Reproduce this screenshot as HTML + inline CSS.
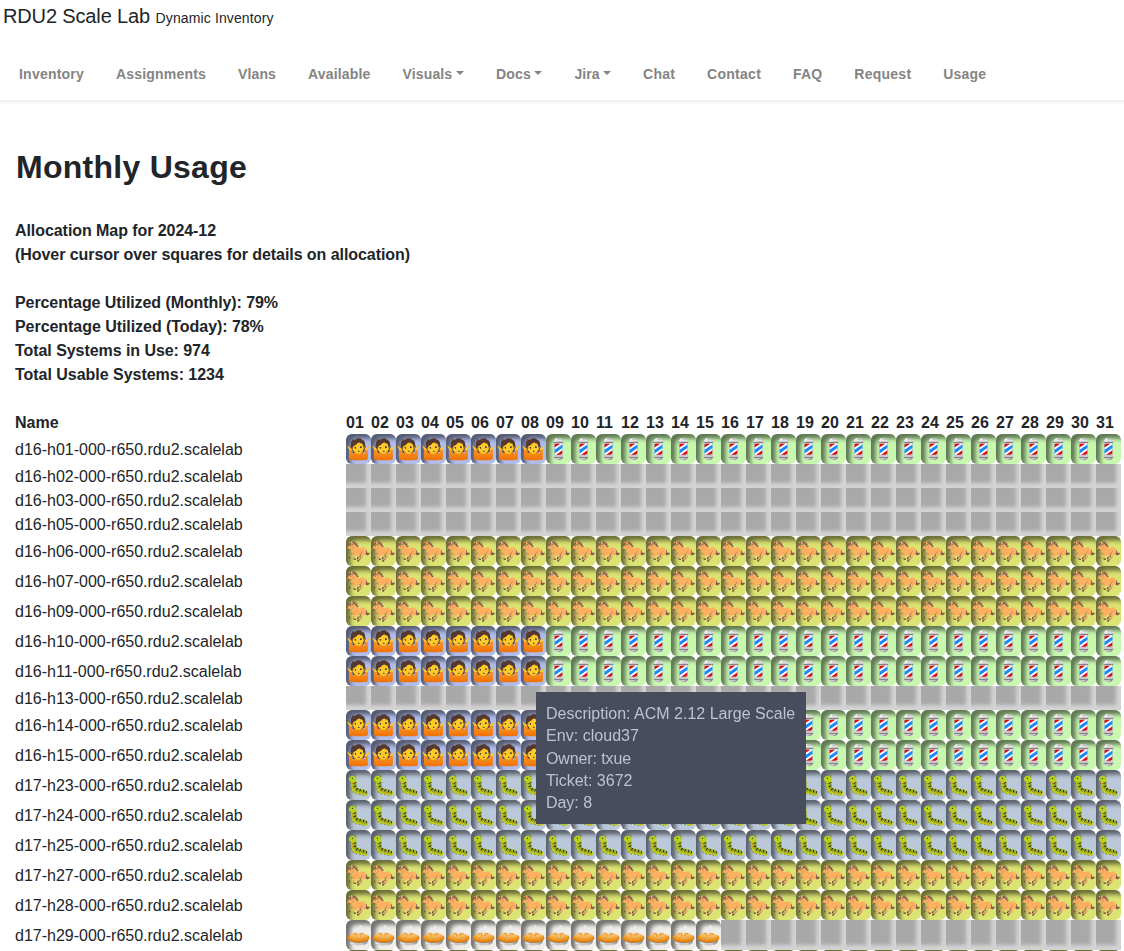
<!DOCTYPE html>
<html lang="en">
<head>
<meta charset="utf-8">
<title>RDU2 Scale Lab - Monthly Usage</title>
<style>
*{box-sizing:border-box}
html,body{margin:0;padding:0}
body{width:1124px;height:951px;overflow:hidden;background:#fff;color:#212529;font-family:"Liberation Sans",sans-serif;font-size:16px;line-height:24px;position:relative}
header{position:absolute;left:-10px;top:0;width:1144px;height:100px;background:#fff;box-shadow:0 2px 4px rgba(0,0,0,.08)}
.brand{position:absolute;left:13px;top:1px;font-size:20px;line-height:30px;white-space:nowrap}
.brand small{font-size:14px}
nav{position:absolute;left:13px;top:62px;height:24px;white-space:nowrap;font-size:0}
nav a{display:inline-block;font-size:14px;font-weight:700;color:#848484;padding:0 16px;line-height:24px}
nav a.dd::after{content:"";display:inline-block;margin-left:3.6px;vertical-align:4.5px;border-top:4.2px solid;border-left:4.2px solid transparent;border-right:4.2px solid transparent}
main{position:absolute;left:15px;top:0;width:1109px}
h1{position:absolute;left:1px;top:148px;margin:0;font-size:32px;line-height:38px;font-weight:700;white-space:nowrap}
.info{position:absolute;left:0;top:219px;white-space:nowrap}
table{position:absolute;left:0;top:410px;border-collapse:collapse;border-spacing:0;table-layout:fixed;width:1106px}
th,td{padding:0;text-align:left;vertical-align:middle;white-space:nowrap;overflow:visible}
th,td.n{line-height:22px;padding-top:2px}
th{font-weight:700;height:24px;width:25px}
.n{width:331px}
td.g{height:24px;background:#a9a9a9;box-shadow:inset -5px -5px 3.8px #d3d3d3}
td.e{height:30px;border-radius:6px;position:relative}
td.e i{display:block;width:25px;height:30px;position:relative}
td.e i::before,td.e i::after,td.e b::before,td.e b::after,td.e u::before,td.e u::after{content:"";position:absolute;left:0;top:0;width:25px;height:30px}
.s{background:#b0bdeb}
.b{background:#c8f8b0}
.h{background:#dbe372}
.c{background:#bbc8da}
.p{background:#efeeea}
td.e{box-shadow:inset 4.5px 4.5px 4px rgba(0,0,0,.52)}
.tip{position:absolute;left:521px;top:692px;width:270px;height:132px;background:#484d5e;color:#bcc2cf;padding:10px;line-height:22.4px;white-space:nowrap}
.tip .d{position:relative;top:1px}
.tip{will-change:transform}
.s i::before{background:#543930;clip-path:path('M18.46,16.2Q18.63,16.45 18.96,16.49Q19.3,16.53 19.3,16.53Q19.3,16.53 19.22,16.76Q19.14,16.98 18.91,17.16Q18.69,17.33 18.44,17.41Q18.18,17.49 17.99,17.51Q17.99,17.51 17.8,17.75Q17.62,18 17.22,18.33Q16.82,18.66 16.13,18.96Q15.45,19.27 14.45,19.38L12.97,19.56L11.48,19.75Q10.47,19.87 9.74,19.74Q9,19.62 8.54,19.39Q8.07,19.17 7.83,18.97Q7.6,18.78 7.6,18.78Q7.4,18.8 7.14,18.79Q6.88,18.78 6.62,18.66Q6.37,18.54 6.23,18.34Q6.09,18.13 6.09,18.13Q6.09,18.13 6.41,18.03Q6.72,17.92 6.84,17.62Q6.95,17.31 6.76,17.04Q6.56,16.77 6.17,16.43Q5.76,16.1 5.37,15.48Q4.98,14.85 4.8,14.01Q4.63,13.17 4.88,12.25Q4.88,12.23 4.98,12.15Q5.08,12.06 5.18,11.96Q5.27,11.86 5.27,11.86Q5.31,11.84 5.89,11.78Q6.46,11.71 7.41,11.59Q8.36,11.47 9.53,11.33Q10.7,11.18 11.93,11.02Q13.16,10.87 14.34,10.73Q15.51,10.59 16.46,10.48Q17.4,10.36 17.98,10.3Q18.55,10.24 18.57,10.24L18.89,10.2Q18.89,10.22 18.97,10.37Q19.06,10.52 19.06,10.52Q19.53,11.36 19.56,12.21Q19.59,13.05 19.36,13.77Q19.12,14.48 18.81,14.89Q18.52,15.3 18.39,15.61Q18.26,15.93 18.46,16.2Z')}
.s b::before{background:linear-gradient(#ffb300 11.41px,#ffca28 14.15px);clip-path:path('M5.55,14.87Q5.61,14.89 5.78,15.09Q5.96,15.28 5.96,15.67Q5.96,15.77 5.88,16.02Q5.8,16.28 5.71,16.56Q5.62,16.84 5.57,17Q5.53,17.14 5.39,17.14Q5.37,17.14 5.37,17.14L3.63,16.84Q3.48,16.8 3.48,16.67Q3.48,16.67 3.44,16.36Q3.4,16.04 3.25,15.6Q3.11,15.16 2.79,14.79L2.79,14.79Q2.64,14.64 2.35,14.2Q2.07,13.76 1.83,13.19Q1.58,12.62 1.52,12.08Q1.48,11.84 1.59,11.65Q1.7,11.45 1.86,11.39Q1.95,11.38 2.08,11.41Q2.21,11.45 2.29,11.63Q2.5,12.16 2.82,12.68Q3.14,13.21 3.32,13.45Q3.44,13.35 3.57,13.35Q3.83,13.33 4.06,13.5Q4.3,13.68 4.43,13.82Q4.94,14.4 5.55,14.87ZM23.09,11.39Q23.26,11.45 23.36,11.65Q23.46,11.84 23.42,12.08Q23.36,12.61 23.11,13.18Q22.85,13.76 22.58,14.2Q22.3,14.64 22.15,14.79L22.15,14.79Q21.78,15.22 21.64,15.65Q21.5,16.08 21.48,16.37Q21.46,16.65 21.46,16.65Q21.48,16.82 21.31,16.84L19.57,17.14Q19.57,17.14 19.55,17.14Q19.41,17.14 19.38,17Q19.32,16.84 19.23,16.56Q19.14,16.28 19.06,16.02Q18.98,15.77 18.98,15.69Q18.98,15.28 19.16,15.09Q19.34,14.89 19.39,14.87Q20,14.42 20.51,13.84Q20.64,13.68 20.88,13.5Q21.11,13.33 21.37,13.35Q21.5,13.37 21.62,13.45Q21.8,13.21 22.12,12.68Q22.44,12.16 22.64,11.65Q22.73,11.45 22.86,11.41Q22.99,11.38 23.09,11.39Z')}
.s u::before{background:linear-gradient(#f78c1f 18.46px,#f47f12 22.45px,#ef6c00 26.77px);clip-path:path('M21.93,23.78L21.91,16.36Q21.89,16.1 21.64,16.08L19.3,15.95Q19.3,15.95 19.29,15.95Q19.28,15.95 19.28,15.95Q19.02,15.95 18.98,16.2L18.5,19.68Q17.93,19.19 17.12,18.86Q16.31,18.52 15.23,18.52Q15.08,18.52 14.52,18.52Q13.96,18.52 13.21,18.52Q12.46,18.52 11.71,18.52Q10.96,18.52 10.4,18.51Q9.84,18.5 9.71,18.5Q8.61,18.5 7.8,18.83Q6.99,19.15 6.43,19.66L5.94,16.18Q5.9,15.93 5.64,15.93L5.62,15.93L3.28,16.06Q3.03,16.08 3.03,16.34L3.01,23.76Q2.99,24.4 3.3,24.94Q3.61,25.48 4.14,25.8Q4.67,26.12 5.33,26.12Q5.72,26.12 6.07,25.96L6.07,25.96Q6.93,25.55 7.05,24.62L7.05,24.62Q7.05,24.62 7.05,24.6L7.07,24.62L7.07,26.14L17.87,26.14L17.87,24.64L17.87,24.64L17.87,24.64Q17.93,25.11 18.22,25.48Q18.36,25.67 18.57,25.81Q18.71,25.91 18.87,25.98Q18.87,25.98 18.89,26Q19.22,26.14 19.61,26.14Q20.25,26.14 20.78,25.83Q21.31,25.52 21.62,24.97Q21.93,24.42 21.93,23.78Z')}
.s u::after{background:#e59600;clip-path:path('M10.78,17.78L14.12,17.78L14.12,19.62Q14.12,20.24 13.66,20.68Q13.2,21.12 12.46,21.12Q11.7,21.12 11.24,20.68Q10.78,20.24 10.78,19.62ZM16.56,11.45Q17.3,11.38 17.9,11.87Q18.5,12.37 18.59,13.15Q18.67,13.93 18.22,14.56Q17.77,15.18 17.03,15.26L7.93,16.38Q7.19,16.45 6.6,15.96Q6.02,15.48 5.92,14.7Q5.82,13.89 6.28,13.28Q6.74,12.66 7.46,12.57Z')}
.s b::after{background:radial-gradient(circle at 9.41px 13.8px,#404040 .55px,transparent 1.1px),radial-gradient(circle at 14.9px 13.11px,#404040 .55px,transparent 1.1px),radial-gradient(1.2px .8px at 12.7px 17.25px,#795548 60%,transparent 110%),#ffca28;clip-path:path('M11.23,5.45Q12.31,5.32 13.37,5.75Q14.44,6.18 15.35,7.09Q16.26,7.99 16.9,9.32Q17.53,10.65 17.73,12.32Q17.93,14 17.61,15.3Q17.3,16.6 16.6,17.52Q15.9,18.45 14.95,18.99Q14.01,19.52 12.96,19.65Q11.89,19.78 10.85,19.49Q9.8,19.19 8.9,18.46Q8,17.73 7.38,16.55Q6.75,15.36 6.55,13.69Q6.35,12.02 6.64,10.57Q6.93,9.13 7.6,8.03Q8.27,6.93 9.2,6.26Q10.13,5.59 11.23,5.45L11.23,5.45Z')}
.s i::after{background:#543930;clip-path:path('M18.2,6.98Q18.38,7.2 18.6,7.68Q18.83,8.17 18.96,8.85Q19.1,9.52 18.98,10.28Q18.91,10.85 18.71,11.21Q18.52,11.57 18.35,11.78Q18.18,11.98 18.18,12.12Q18.18,12.66 18.06,13.19Q17.93,13.72 17.85,13.99Q17.83,14.05 17.78,14.05Q17.73,14.05 17.73,13.99Q17.58,13.33 17.37,12.47Q17.17,11.61 16.95,11Q16.68,10.2 16.3,9.84Q15.92,9.48 15.55,9.39Q15.18,9.3 14.93,9.34Q14.69,9.38 14.69,9.38Q14.69,9.38 14.55,9.18Q14.41,8.97 14.09,8.79Q13.77,8.6 13.22,8.62Q12.68,8.64 11.88,9.07Q11.29,9.4 10.78,9.89Q9.96,10.67 9.15,11.14Q8.34,11.61 7.81,11.82Q7.29,12.04 7.29,12.04Q7.32,12.2 7.3,12.64Q7.29,13.09 7.24,13.66Q7.19,14.23 7.13,14.73Q7.07,15.24 7.03,15.5Q7.03,15.54 6.98,15.54Q6.93,15.55 6.91,15.52Q6.78,15.28 6.57,14.68Q6.37,14.07 6.31,13.05Q6.31,13.05 6.01,12.98Q5.7,12.9 5.35,12.69Q5,12.49 4.8,12.14Q4.45,11.43 4.66,10.86Q4.86,10.28 5.14,9.97Q5.02,9.73 4.93,9.26Q4.84,8.78 5.06,8.13Q5.25,7.59 5.65,7.34Q6.05,7.1 6.43,7.04Q6.17,6.51 6.24,6.1Q6.31,5.69 6.51,5.42Q6.72,5.14 6.91,5.02Q7.11,4.89 7.11,4.89Q7.11,4.89 7.15,5.07Q7.19,5.24 7.3,5.47Q7.42,5.69 7.66,5.79Q8.05,5.95 8.46,5.84Q8.87,5.73 9.17,5.54Q9.47,5.36 9.55,5.3Q9.9,5.05 10.49,4.71Q11.07,4.38 11.91,4.22Q12.75,4.05 13.89,4.27Q14.53,4.38 15.13,4.77Q15.72,5.16 15.88,5.75Q16.29,5.73 16.74,5.93Q17.19,6.12 17.58,6.41Q17.97,6.71 18.2,6.98Z')}
.b i::before{background:linear-gradient(90deg,#a1d2d6 8.95px,#fff 9.02px,#fff 15.98px,#a1d2d6 16.05px);clip-path:path('M8.65,9.44L16.29,9.01L16.45,20.89L8.79,20.95ZM8.14,9.38L8.87,9.11L9.02,20.85L8.3,21.12ZM15.98,9.19L16.66,9.17L16.76,20.81L16.05,20.89Z')}
.b b::before{background:#d80d1a;clip-path:path('M8.55,10.36L8.52,13.62L14.69,9.38L10.41,9.29ZM9.88,20.89L13.83,21.43L16.27,19.7L16.37,16.3Z')}
.b u::before{background:#1d86fa;clip-path:path('M8.65,15.75L8.61,19.4L16.35,14.01L16.39,10.48Z')}
.b u::after{background:linear-gradient(#c8c8c8 6.43px,#e1e0e0 6.43px,#e1e0e0 7.21px,#c8c8c8 7.21px,#c8c8c8 7.86px,#858585 7.86px,#858585 8.68px,#c8c8c8 8.68px,#c8c8c8 21.51px,#e1e0e0 21.51px,#e1e0e0 22.27px,#c8c8c8 22.27px,#c8c8c8 22.82px,#858585 22.82px,#858585 23.56px,#c8c8c8 23.56px);clip-path:path('M8.07,9.5Q8.07,9.5 7.87,9.35Q7.68,9.21 7.48,8.88Q7.29,8.54 7.29,8.02Q7.29,7.47 7.46,7.19Q7.64,6.9 7.81,6.8Q7.99,6.71 7.99,6.71Q7.99,6.71 8.11,6.21Q8.22,5.71 8.83,5.11Q9.47,4.48 10.41,4.33Q11.35,4.19 12.42,4.17Q13.38,4.17 14.14,4.3Q14.9,4.44 15.49,4.83Q16.05,5.2 16.32,5.6Q16.58,6 16.66,6.27Q16.74,6.53 16.74,6.53Q16.74,6.53 16.9,6.65Q17.07,6.77 17.25,7.05Q17.42,7.33 17.46,7.8Q17.48,8.29 17.3,8.65Q17.13,9.01 16.91,9.22Q16.7,9.42 16.62,9.46Q16.58,9.48 15.96,9.5Q15.33,9.52 14.38,9.54Q13.42,9.56 12.34,9.56Q11.27,9.56 10.3,9.56Q9.34,9.56 8.71,9.55Q8.09,9.54 8.07,9.5ZM8.2,20.75Q8.24,20.71 8.86,20.7Q9.47,20.69 10.42,20.7Q11.37,20.71 12.4,20.69Q13.46,20.69 14.45,20.69Q15.45,20.69 16.09,20.7Q16.74,20.71 16.76,20.75Q16.84,20.85 16.91,21.16Q16.99,21.47 16.99,21.47Q16.99,21.47 17.14,21.57Q17.29,21.67 17.44,21.89Q17.6,22.12 17.6,22.47Q17.62,22.84 17.48,23.06Q17.34,23.29 17.21,23.41Q17.07,23.52 17.07,23.52Q17.07,23.52 17.02,23.79Q16.97,24.05 16.76,24.46Q16.54,24.87 16.07,25.32Q15.47,25.91 14.66,26.05Q13.85,26.2 12.71,26.2Q11.68,26.2 10.89,26.1Q10.1,26 9.36,25.48Q8.89,25.14 8.62,24.71Q8.36,24.29 8.25,23.95Q8.14,23.62 8.14,23.62Q8.14,23.62 8,23.52Q7.85,23.43 7.69,23.21Q7.52,23 7.46,22.62Q7.42,22.23 7.57,21.98Q7.71,21.73 7.88,21.6Q8.05,21.47 8.05,21.47Q8.05,21.47 8.06,21.31Q8.07,21.14 8.11,20.96Q8.14,20.79 8.2,20.75Z')}
.b b::after{background:#fff;clip-path:path('M11.82,7Q11.82,6.84 11.27,6.79Q10.72,6.73 9.73,6.75Q8.73,6.77 8.37,6.85Q8.01,6.94 8.01,7.25Q8.01,7.45 8.3,7.46Q8.59,7.47 8.99,7.4Q9.39,7.33 9.69,7.31Q10.51,7.27 11.16,7.2Q11.82,7.12 11.82,7ZM11.89,4.6Q11.88,4.5 11.52,4.47Q11.17,4.44 10.68,4.52Q10.2,4.6 9.77,4.85Q9.34,5.07 9.16,5.41Q8.98,5.75 8.98,5.98Q9,6.1 9.3,6.12Q9.59,6.14 9.91,6.11Q10.23,6.08 10.33,6.04Q10.49,5.98 10.61,5.78Q10.72,5.57 10.96,5.34Q11.27,4.99 11.6,4.83Q11.93,4.68 11.89,4.6Z')}
.b i::after{background:#858585;clip-path:path('M12.01,25.5Q12.01,25.38 12.36,25.33Q12.71,25.28 13.15,25.22Q13.59,25.16 13.89,25.05Q14.32,24.87 14.56,24.49Q14.8,24.11 14.86,24.05Q14.88,24.01 15.23,23.99Q15.59,23.97 15.93,23.98Q16.27,23.99 16.31,24.03Q16.35,24.09 16.2,24.39Q16.05,24.7 15.68,25.04Q15.31,25.38 14.67,25.52Q14.1,25.65 13.48,25.69Q12.85,25.73 12.42,25.68Q11.99,25.63 12.01,25.5Z')}
.h i::before{background:#865b52;clip-path:path('M19.34,13.76L18.81,16.94Q18.81,16.94 18.88,17.2Q18.95,17.45 19.12,17.8Q19.3,18.15 19.59,18.48Q19.88,18.82 20.33,18.99Q21.33,19.38 22.01,19.13Q22.7,18.88 23.2,18.37Q23.63,17.92 23.78,17.49Q23.93,17.06 23.93,16.98Q23.91,16.73 23.63,16.71Q23.36,16.69 22.95,16.8Q22.54,16.92 22.16,16.94Q21.78,16.96 21.48,16.55Q21.15,16.08 21.04,15.67Q20.94,15.26 20.86,14.89Q20.78,14.52 20.53,14.19Q20.27,13.86 20,13.77Q19.73,13.68 19.53,13.72Q19.34,13.76 19.34,13.76ZM11.45,11.63L4.88,7.86Q4.88,7.86 4.69,8.26Q4.49,8.66 4.22,9.01Q3.95,9.34 3.39,9.63Q2.83,9.91 2.36,9.93Q1.89,9.97 1.59,9.88Q1.29,9.79 1.31,9.56Q1.33,9.3 1.57,9.29Q1.82,9.29 1.95,9.23Q2.13,9.15 2.46,7.78Q2.56,7.33 2.9,7.02Q3.24,6.71 3.66,6.55Q4.08,6.39 4.43,6.39Q4.96,6.39 5.53,6.53Q6.09,6.67 6.46,6.59Q6.86,6.51 7.15,6.33Q7.44,6.14 7.6,6.02Q7.75,5.93 8.08,5.74Q8.4,5.55 8.78,5.53Q9.16,5.5 9.45,5.85Q9.67,6.1 9.66,6.37Q9.65,6.63 9.54,6.85Q9.43,7.08 9.37,7.26Q9.3,7.45 9.39,7.57Q9.51,7.7 9.7,7.61Q9.88,7.51 10.14,7.37Q10.39,7.23 10.68,7.23Q10.98,7.23 11.25,7.55Q11.54,7.86 11.5,8.16Q11.46,8.46 11.29,8.73Q11.11,8.99 10.98,9.2Q10.84,9.4 10.94,9.52Q11.04,9.62 11.25,9.58Q11.46,9.54 11.74,9.5Q12.01,9.46 12.24,9.53Q12.46,9.6 12.58,9.93Q12.7,10.24 12.53,10.54Q12.36,10.85 12.11,11.09Q11.86,11.34 11.65,11.48Q11.45,11.63 11.45,11.63Z')}
.h b::before{background:linear-gradient(#b3875d 18.09px,#916656 22.39px);clip-path:path('M6.33,16.34L7.4,18.21Q7.4,18.21 7.18,18.23Q6.95,18.25 6.66,18.27Q6.37,18.29 6.15,18.29Q5.94,18.31 5.59,18.31Q5.23,18.31 4.91,18.32Q4.59,18.33 4.45,18.37Q4.26,18.45 4.02,18.77Q3.79,19.09 3.73,19.3Q3.65,19.54 3.65,19.81Q3.65,20.09 3.65,20.59Q3.67,20.91 3.49,21.22Q3.3,21.53 3.12,21.74Q2.93,21.94 2.93,21.94Q2.93,21.94 2.73,21.79Q2.54,21.65 2.33,21.36Q2.13,21.06 2.07,20.61Q2.03,20.28 2.21,19.95Q2.38,19.62 2.59,19.32Q2.79,19.03 2.89,18.8Q2.99,18.58 2.98,18.36Q2.97,18.13 3.01,17.92Q3.05,17.7 3.28,17.47Q3.61,17.14 4.06,17.17Q4.51,17.2 4.88,17.08Q5.12,17 5.46,16.82Q5.8,16.65 6.06,16.49Q6.33,16.34 6.33,16.34ZM16.68,14.34L17.71,14.79L16.45,16.98Q16.45,16.98 16.25,17.16Q16.05,17.33 15.77,17.57Q15.49,17.8 15.23,17.96Q15.2,18.02 15.19,18.36Q15.18,18.7 15.2,19.13Q15.21,19.56 15.32,20.01Q15.43,20.46 15.25,20.81Q15.2,20.93 14.92,21.01Q14.65,21.1 14.31,21.18Q13.96,21.26 13.69,21.33Q13.42,21.39 13.34,21.49Q13.2,21.69 12.99,21.77Q12.77,21.84 12.64,21.86Q12.58,21.86 12.53,22.05Q12.48,22.23 12.48,22.23Q12.48,22.23 12.27,22.25Q12.05,22.27 11.77,22.28Q11.48,22.29 11.26,22.25Q11.04,22.21 11,22.12Q10.92,21.92 11.05,21.82Q11.19,21.73 11.21,21.63Q11.23,21.55 11.2,21.39Q11.17,21.24 11.37,20.95Q11.52,20.69 11.78,20.61Q12.03,20.54 12.28,20.54Q12.52,20.54 12.66,20.54Q12.79,20.52 13.03,20.44Q13.26,20.36 13.47,20.25Q13.67,20.14 13.73,20.09Q13.75,20.03 13.75,19.82Q13.75,19.62 13.69,19.29Q13.63,18.99 13.56,18.88Q13.5,18.76 13.5,18.76Q13.5,18.76 13.3,18.81Q13.11,18.86 12.93,18.89Q12.81,18.93 12.58,18.98Q12.34,19.03 12.16,19.06Q11.97,19.09 11.97,19.09L12.21,18.23ZM6.04,12.21L5.76,10.95L6.74,9.3L9,11.24L6.54,13.19Z')}
.h u::before{background:radial-gradient(circle at 0.7px 16.38px,#865b52 2.14px,#a67255 3.64px,rgba(254,175,95,0) 4.84px),linear-gradient(#feaf5f 20.24px,#dd985b 22.2px,#865b52 24.93px);clip-path:path('M3.98,6.84L2.97,7.49Q2.97,7.49 2.92,7.22Q2.87,6.96 2.84,6.61Q2.81,6.26 2.84,5.97Q2.87,5.69 3.03,5.63Q3.16,5.59 3.33,5.77Q3.5,5.95 3.64,6.2Q3.79,6.45 3.89,6.65Q3.98,6.84 3.98,6.84ZM6.43,12.96Q6.41,12.92 6.65,12.75Q6.89,12.59 7.16,12.25Q7.42,11.92 7.44,11.45Q7.5,10.91 7.29,10.37Q7.09,9.83 6.8,9.7Q6.68,9.64 6.32,9.64Q5.96,9.64 5.53,9.65Q5.1,9.66 4.72,9.62Q4.34,9.58 4.18,9.46Q4.02,9.34 4.22,9.11Q4.57,8.7 4.72,8.23Q4.86,7.76 4.9,7.42Q4.94,7.08 4.94,7.08Q4.94,7.08 4.87,6.81Q4.8,6.55 4.88,6.1Q4.96,5.75 5.17,5.43Q5.37,5.11 5.51,5.12Q5.66,5.14 5.85,5.49Q6.04,5.83 6.07,6.1Q6.15,6.51 6.09,6.77Q6.04,7.02 6.04,7.02Q6.04,7.02 6.57,7.16Q7.11,7.29 8.09,7.96Q8.85,8.45 9.44,9.07Q10.04,9.7 10.43,10.19Q10.82,10.69 10.96,10.83Q11.13,10.98 11.31,11Q11.48,11.02 11.91,11.3Q12.19,11.47 12.29,11.61Q12.4,11.75 12.53,11.83Q12.66,11.92 12.97,11.94Q13.22,11.94 13.6,11.94Q13.98,11.94 14.31,11.92Q14.63,11.9 14.73,11.86Q14.94,11.79 15.16,11.64Q15.37,11.49 15.62,11.41Q16.07,11.3 16.75,11.36Q17.42,11.41 18.09,11.75Q18.65,12.04 19.19,12.62Q19.73,13.21 20.03,14.05Q20.33,14.89 20.2,15.95Q20.06,17.02 19.59,17.59Q19.12,18.15 18.52,18.31Q17.91,18.46 17.34,18.29Q16.54,18.05 16.34,17.47Q16.13,16.88 16.23,16.34Q16.31,15.96 16.47,15.7Q16.64,15.44 16.74,15.28Q16.84,15.12 16.74,15.05Q16.6,14.91 16.35,15.23Q16.09,15.55 15.94,15.83Q15.84,16 15.45,16.55Q15.06,17.1 14.46,17.7Q13.87,18.31 13.14,18.68Q12.07,19.23 11.2,19.23Q10.33,19.23 9.71,19.17Q8.81,19.09 8.28,18.88Q7.75,18.68 7.36,18.54Q6.6,18.29 6.13,17.43Q5.92,17.04 5.83,16.38Q5.74,15.71 5.82,15.24Q5.88,14.91 6.07,14.67Q6.27,14.42 6.46,14.29Q6.64,14.15 6.64,14.15Q6.64,14.15 6.62,13.95Q6.6,13.76 6.58,13.6Q6.56,13.45 6.51,13.27Q6.46,13.09 6.43,12.96ZM8.36,18.46Q8.36,18.46 8.35,18.21Q8.34,17.96 8.46,17.61Q8.57,17.25 8.92,16.94Q9.26,16.63 9.96,16.53Q10.61,16.41 10.91,16.64Q11.21,16.86 11.28,17.24Q11.35,17.62 11.28,18.04Q11.21,18.45 11.12,18.73Q11.04,19.01 11.04,19.01Q11.04,19.01 10.79,19.2Q10.55,19.38 10.18,19.67Q9.8,19.95 9.44,20.22Q9.08,20.5 8.87,20.63Q8.59,20.83 8.19,21.05Q7.79,21.28 7.73,21.34Q7.68,21.39 7.73,21.53Q7.79,21.67 7.81,21.8Q7.85,21.94 7.9,22.14Q7.95,22.33 8.05,22.39Q8.14,22.45 8.21,22.35Q8.28,22.25 8.44,22.21Q8.54,22.2 8.7,22.36Q8.87,22.53 9,22.69Q9.14,22.86 9.14,22.86Q9.14,22.86 9.03,23.13Q8.93,23.41 8.73,23.68Q8.54,23.95 8.26,23.95Q7.5,23.95 7.13,23.35Q6.97,23.09 6.9,22.79Q6.84,22.49 6.78,22.25Q6.74,22.06 6.63,21.93Q6.52,21.8 6.43,21.62Q6.33,21.43 6.31,21.06Q6.29,20.71 6.53,20.52Q6.78,20.32 6.86,20.24Q6.93,20.16 7.1,19.99Q7.27,19.81 7.42,19.66Q7.58,19.5 7.84,19.22Q8.11,18.93 8.14,18.89Q8.2,18.86 8.28,18.66Q8.36,18.46 8.36,18.46ZM18.28,14.3Q18.42,14.34 18.78,14.51Q19.14,14.68 19.51,15Q19.88,15.32 20.05,15.8Q20.21,16.28 19.96,16.94Q19.59,17.86 19.1,18.28Q18.61,18.7 18.16,19.07Q17.6,19.54 17.29,19.83Q16.97,20.12 16.82,20.36Q16.66,20.61 16.65,20.97Q16.64,21.34 16.43,21.75Q16.31,21.94 15.96,22.25Q15.61,22.57 15.23,22.85Q14.86,23.13 14.71,23.25Q14.47,23.45 14.22,23.64Q13.96,23.84 13.75,24.11Q13.55,24.4 13.37,24.44Q13.18,24.48 13.18,24.48Q13.18,24.48 13.23,24.74Q13.28,25.01 13.12,25.16Q13.09,25.22 12.71,25.17Q12.34,25.12 12.13,25.09Q11.89,25.05 11.7,24.77Q11.5,24.5 11.62,24.25Q11.74,23.97 12.02,23.86Q12.3,23.74 12.3,23.74Q12.3,23.74 12.31,23.53Q12.32,23.33 12.54,23.09Q12.68,22.94 12.91,22.87Q13.14,22.8 13.38,22.75Q13.61,22.7 13.71,22.61Q13.95,22.37 14.18,22.17Q14.41,21.96 14.47,21.84Q14.55,21.75 14.56,21.43Q14.57,21.12 14.8,20.77Q15.04,20.44 15.28,20.24Q15.53,20.05 15.57,20.01Q15.62,19.95 15.7,19.72Q15.78,19.5 15.82,19.29Q15.88,19.07 15.98,18.46Q16.07,17.84 16.13,17.04Q16.21,16.02 16.63,15.41Q17.05,14.79 17.54,14.53Q18.03,14.27 18.28,14.3ZM6.95,9.56L7.97,8.64Q7.97,8.64 7.66,8.52Q7.34,8.41 6.88,8.24Q6.43,8.07 5.97,7.93Q5.51,7.78 5.19,7.7Q4.86,7.62 4.86,7.7Q4.84,7.92 4.64,8.32Q4.43,8.72 4.14,9.05Q3.89,9.34 3.52,9.54Q3.14,9.73 2.85,9.82Q2.56,9.91 2.56,9.91Q2.56,9.91 2.57,10.11Q2.58,10.3 2.57,10.54Q2.56,10.77 2.52,10.85Q2.42,11.06 2.18,11.37Q1.93,11.67 1.71,12.08Q1.48,12.49 1.45,13.04Q1.41,13.62 1.6,14.01Q1.8,14.4 2.08,14.62Q2.36,14.83 2.58,14.89Q2.83,14.97 3.02,14.86Q3.2,14.75 3.2,14.75Q3.2,14.75 3.34,14.75Q3.48,14.75 3.73,14.6Q3.95,14.44 4.03,14.22Q4.12,13.99 4.12,13.82Q4.12,13.64 4.12,13.64L4.82,12.84Q4.82,12.84 5.15,12.83Q5.47,12.82 5.84,12.68Q6.21,12.57 6.55,12.21Q6.89,11.86 7.01,11.24Q7.07,10.83 6.96,10.54Q6.86,10.24 6.73,10.07Q6.6,9.89 6.6,9.79Q6.58,9.68 6.69,9.65Q6.8,9.62 6.95,9.56Z')}
.h u::after{background:#b3875d;clip-path:path('M8.03,18.78Q8.03,18.78 7.84,18.75Q7.66,18.72 7.44,18.62Q7.23,18.52 7.12,18.45Q7.01,18.37 6.97,18.31Q6.93,18.25 6.78,17.9Q6.62,17.55 6.6,17.18Q6.58,16.73 6.71,16.56Q6.84,16.39 7.09,16.41Q7.3,16.45 7.34,16.62Q7.38,16.79 7.35,17.01Q7.32,17.23 7.34,17.39Q7.38,17.74 7.45,17.94Q7.52,18.13 7.66,18.37Q7.75,18.52 7.89,18.65Q8.03,18.78 8.03,18.78Z')}
.h b::after{background:#5f3d2e;clip-path:path('M4.92,9.89Q4.82,9.71 4.62,9.65Q4.41,9.58 4.26,9.66Q3.91,9.85 4.08,10.3Q4.16,10.5 4.38,10.56Q4.61,10.63 4.73,10.57Q4.9,10.48 4.96,10.28Q5.02,10.09 4.92,9.89ZM2.01,13.25Q2.13,13.13 2.29,13.23Q2.46,13.33 2.56,13.52Q2.64,13.72 2.68,13.94Q2.71,14.17 2.58,14.27Q2.3,14.42 2.03,13.95Q1.76,13.48 2.01,13.25ZM3.38,13.58Q3.38,13.58 3.36,13.78Q3.34,13.97 3.3,14.13Q3.26,14.36 3.11,14.58Q2.95,14.79 2.91,14.87Q2.87,14.93 3.06,14.87Q3.24,14.81 3.28,14.77Q3.36,14.71 3.46,14.64Q3.55,14.56 3.61,14.27Q3.69,13.88 3.69,13.74Q3.69,13.6 3.69,13.6Q3.69,13.6 3.75,13.51Q3.81,13.43 3.83,13.23Q3.85,13.02 3.71,12.91Q3.57,12.8 3.42,12.88Q3.26,12.98 3.26,13.12Q3.26,13.27 3.32,13.41Q3.38,13.54 3.38,13.58ZM3.65,20.63Q3.65,20.63 3.75,20.63Q3.85,20.63 3.91,20.67Q4.1,20.83 4.14,21.3Q4.18,21.79 4.05,22.21Q3.93,22.64 3.59,22.51Q3.28,22.39 3.05,22.12Q2.81,21.84 2.81,21.84Q2.81,21.84 3,21.66Q3.18,21.47 3.32,21.26Q3.4,21.08 3.53,20.86Q3.65,20.63 3.65,20.63ZM8.3,22.29Q8.3,22.29 8.47,22.19Q8.63,22.08 8.79,22.14Q8.91,22.16 9.08,22.24Q9.26,22.33 9.47,22.68Q9.69,23.04 9.79,23.4Q9.88,23.76 9.82,23.84Q9.73,24.03 9.16,24.05Q8.73,24.07 8.48,24.01Q8.22,23.95 8.22,23.95Q8.22,23.95 8.38,23.74Q8.54,23.52 8.55,23.17Q8.57,22.94 8.49,22.7Q8.4,22.47 8.3,22.29ZM11.78,22.12Q12.03,22.14 12.28,22.13Q12.52,22.12 12.52,22.12Q12.52,22.12 12.52,22.27Q12.52,22.43 12.48,22.49Q12.44,22.55 12.3,22.75Q12.17,22.96 11.99,23.07Q11.66,23.29 11.37,23.37Q11.07,23.45 10.96,23.41Q10.84,23.37 10.84,23.15Q10.84,22.94 10.86,22.64Q10.88,22.35 10.92,22.17Q10.96,21.98 10.96,21.98Q10.96,21.98 11.22,22.05Q11.48,22.12 11.78,22.12ZM11.74,24.07Q11.74,24.07 11.95,24.15Q12.17,24.23 12.5,24.48Q12.81,24.71 12.99,24.91Q13.16,25.11 13.16,25.11Q13.16,25.11 13.12,25.17Q13.07,25.24 13.05,25.26Q13.01,25.28 12.71,25.39Q12.42,25.5 11.93,25.52Q11.46,25.52 11.26,25.45Q11.05,25.38 11.05,25.26Q11.04,25.18 11.13,24.99Q11.23,24.79 11.33,24.64Q11.45,24.48 11.55,24.29Q11.66,24.11 11.74,24.07Z')}
.c i::before{background:#70853c;clip-path:path('M6.7,4.42Q6.78,4.29 7,4.34Q7.23,4.4 7.36,4.44Q7.46,4.48 7.84,4.66Q8.22,4.83 8.64,5.17Q9.06,5.52 9.24,6.04Q9.43,6.59 9.36,7Q9.28,7.41 9.13,7.64Q8.98,7.88 8.98,7.88Q8.98,7.88 8.84,7.83Q8.69,7.78 8.59,7.62Q8.5,7.47 8.63,7.16Q8.83,6.67 8.77,6.38Q8.71,6.1 8.52,5.83Q8.34,5.54 7.86,5.3Q7.38,5.07 7.09,4.95Q6.54,4.71 6.7,4.42ZM8.16,21.06Q7.89,20.73 7.48,20.7Q7.08,20.67 6.79,20.92Q6.48,21.18 6.45,21.58Q6.42,21.98 6.69,22.31Q6.95,22.61 7.36,22.65Q7.77,22.69 8.08,22.43Q8.37,22.19 8.4,21.78Q8.42,21.36 8.16,21.06ZM10.69,22.59Q10.31,22.41 9.93,22.54Q9.55,22.68 9.38,23.02Q9.2,23.38 9.34,23.76Q9.47,24.14 9.85,24.33Q10.21,24.5 10.6,24.38Q11,24.25 11.17,23.89Q11.34,23.54 11.19,23.16Q11.05,22.77 10.69,22.59ZM14.13,23.18Q13.72,23.11 13.39,23.35Q13.06,23.58 13,23.96Q12.93,24.36 13.17,24.68Q13.41,25.01 13.83,25.08Q14.22,25.14 14.56,24.91Q14.9,24.68 14.96,24.28Q15.03,23.9 14.78,23.57Q14.53,23.24 14.13,23.18ZM17.62,23.87Q17.2,23.81 16.87,24.04Q16.54,24.28 16.48,24.65Q16.42,25.05 16.65,25.38Q16.89,25.71 17.31,25.78Q17.7,25.84 18.04,25.61Q18.38,25.37 18.45,24.97Q18.51,24.6 18.26,24.27Q18.01,23.94 17.62,23.87ZM6.04,13.15Q6.04,12.78 5.76,12.52Q5.49,12.25 5.1,12.25Q4.71,12.25 4.42,12.52Q4.14,12.78 4.14,13.15Q4.14,13.52 4.42,13.79Q4.71,14.05 5.1,14.05Q5.49,14.05 5.76,13.79Q6.04,13.52 6.04,13.15ZM6.16,15.89Q6.13,15.52 5.83,15.28Q5.54,15.04 5.15,15.07Q4.76,15.11 4.5,15.39Q4.24,15.68 4.27,16.05Q4.3,16.42 4.61,16.66Q4.91,16.89 5.3,16.86Q5.69,16.83 5.94,16.54Q6.19,16.26 6.16,15.89ZM6.82,18.67Q6.47,17.66 5.53,17.99Q4.59,18.31 4.94,19.32Q5.26,20.26 6.2,19.94Q7.14,19.61 6.82,18.67ZM9,4.32Q9.12,4.23 9.26,4.31Q9.39,4.4 9.51,4.5Q9.63,4.64 9.91,4.97Q10.2,5.3 10.25,5.95Q10.27,6.18 10.24,6.59Q10.21,7 10.13,7.34Q10.04,7.68 9.9,7.78Q9.73,7.9 9.49,7.74Q9.26,7.59 9.41,7.31Q9.51,7.16 9.58,6.72Q9.65,6.28 9.63,6.06Q9.61,5.71 9.4,5.37Q9.2,5.03 9.08,4.87Q8.96,4.71 8.92,4.57Q8.87,4.42 9,4.32Z')}
.c b::before{background:#b7d019;clip-path:path('M10.88,16.92Q10.62,16.47 10.55,15.7Q10.47,14.93 10.49,13.97Q10.51,13.02 10.55,12.03Q10.59,11.04 10.56,10.14Q10.53,9.25 10.33,8.62Q10.02,7.57 9.25,6.91Q8.48,6.26 7.49,6.02Q6.5,5.79 5.59,5.96Q4.69,6.12 4.01,6.72Q3.34,7.31 3.03,8.13Q2.71,8.95 2.91,9.79Q3.05,10.38 3.38,10.71Q3.71,11.04 4.1,11.21Q4.49,11.38 4.78,11.47Q5.06,11.57 5.1,11.69Q5.18,11.92 5.17,12.73Q5.16,13.54 5.18,14.52Q5.2,15.01 5.24,15.72Q5.29,16.43 5.41,17.24Q5.53,18.05 5.74,18.83Q5.96,19.6 6.29,20.18Q7.01,21.43 8.08,22.25Q9.14,23.07 10.08,23.46Q10.41,23.6 11.04,23.73Q11.66,23.86 12.42,23.97Q13.18,24.09 13.96,24.2Q14.73,24.3 15.34,24.39Q15.96,24.48 16.27,24.54Q16.78,24.66 17.38,24.95Q17.99,25.24 18.61,25.5Q19.24,25.75 19.8,25.79Q20.27,25.81 20.76,25.65Q21.25,25.5 21.62,25.07Q21.99,24.64 22.11,23.86Q22.25,23.05 21.88,22.28Q21.5,21.51 20.72,20.88Q19.94,20.24 18.85,19.87Q17.6,19.48 16.37,19.23Q15.14,18.97 14.04,18.71Q12.95,18.45 12.13,18.04Q11.31,17.62 10.88,16.92Z')}
.c u::before{background:#70853c;clip-path:path('M6.37,14.85Q6.43,14.68 6.73,14.69Q7.03,14.7 7.23,14.68Q7.42,14.68 7.92,14.57Q8.42,14.46 8.83,14.32Q9.71,14.07 10.1,13.78Q10.49,13.48 10.49,13.48L10.51,14.27Q10.51,14.27 10.19,14.48Q9.86,14.7 9.3,14.91Q8.77,15.11 8.13,15.25Q7.5,15.4 7.05,15.36Q6.7,15.34 6.48,15.19Q6.27,15.05 6.37,14.85ZM18.69,19.83Q18.69,19.83 18.82,19.87Q18.95,19.91 19,19.93Q19.08,19.95 19.22,20Q19.36,20.05 19.36,20.05Q19.36,20.05 19.37,20.53Q19.38,21 19.18,21.86Q19.04,22.51 18.8,22.99Q18.55,23.46 18.46,23.6Q18.38,23.72 18.22,23.77Q18.07,23.82 17.95,23.74Q17.85,23.64 17.86,23.53Q17.87,23.43 17.91,23.33Q18.03,23.13 18.2,22.71Q18.38,22.29 18.54,21.73Q18.63,21.39 18.66,20.95Q18.69,20.5 18.69,20.16Q18.69,19.83 18.69,19.83ZM15.59,19.05L16.27,19.21Q16.27,19.21 16.27,19.71Q16.27,20.22 16.07,20.95Q15.92,21.59 15.7,22.01Q15.49,22.43 15.43,22.57Q15.33,22.76 15.11,22.93Q14.88,23.09 14.71,22.88Q14.59,22.74 14.67,22.57Q14.75,22.39 14.8,22.27Q14.84,22.16 15.07,21.69Q15.29,21.22 15.39,20.81Q15.51,20.42 15.55,20.01Q15.59,19.6 15.59,19.32Q15.59,19.05 15.59,19.05ZM12.52,18.23Q12.52,18.23 12.65,18.27Q12.77,18.31 12.83,18.33Q12.89,18.35 13.03,18.41Q13.16,18.46 13.16,18.46Q13.16,18.46 13.12,18.99Q13.07,19.52 12.81,20.18Q12.62,20.73 12.32,21.09Q12.03,21.45 11.79,21.66Q11.54,21.86 11.5,21.88Q11.45,21.94 11.26,22.01Q11.07,22.08 10.9,21.96Q10.68,21.8 10.81,21.65Q10.94,21.49 11,21.43Q11.05,21.38 11.42,21.01Q11.78,20.65 12.13,20.01Q12.27,19.73 12.35,19.3Q12.44,18.88 12.48,18.55Q12.52,18.23 12.52,18.23ZM10.7,16.53Q10.7,16.53 10.77,16.67Q10.84,16.8 10.86,16.88Q10.88,16.94 10.99,17.09Q11.09,17.23 11.09,17.23Q11.09,17.23 10.76,17.61Q10.43,17.98 10.02,18.29Q9.57,18.62 8.99,18.86Q8.42,19.09 8.12,19.09Q7.93,19.09 7.66,19.06Q7.38,19.03 7.36,18.78Q7.32,18.54 7.52,18.48Q7.71,18.43 7.91,18.41Q8.09,18.39 8.57,18.21Q9.06,18.04 9.51,17.72Q9.77,17.55 10.04,17.26Q10.31,16.98 10.51,16.76Q10.7,16.53 10.7,16.53Z')}
.c u::after{background:#fe6014;clip-path:path('M7.2,13.52Q7.2,13.4 7.15,13.29Q7.11,13.19 7.03,13.11Q6.95,13.03 6.85,12.99Q6.75,12.94 6.63,12.94Q6.51,12.94 6.4,12.99Q6.3,13.03 6.22,13.11Q6.14,13.19 6.1,13.29Q6.06,13.4 6.06,13.52Q6.06,13.63 6.1,13.74Q6.14,13.84 6.22,13.92Q6.3,14 6.4,14.04Q6.51,14.09 6.63,14.09Q6.75,14.09 6.85,14.04Q6.95,14 7.03,13.92Q7.11,13.84 7.15,13.74Q7.2,13.63 7.2,13.52ZM7.33,17.16Q7.33,17.05 7.28,16.94Q7.24,16.84 7.16,16.76Q7.08,16.68 6.98,16.64Q6.87,16.59 6.76,16.59Q6.64,16.59 6.53,16.64Q6.43,16.68 6.35,16.76Q6.27,16.84 6.23,16.94Q6.18,17.05 6.18,17.16Q6.18,17.28 6.23,17.38Q6.27,17.49 6.35,17.57Q6.43,17.65 6.53,17.69Q6.64,17.73 6.76,17.73Q6.87,17.73 6.98,17.69Q7.08,17.65 7.16,17.57Q7.24,17.49 7.28,17.38Q7.33,17.28 7.33,17.16ZM9.8,20.79Q9.8,20.67 9.76,20.57Q9.71,20.47 9.63,20.39Q9.56,20.31 9.45,20.26Q9.35,20.22 9.23,20.22Q9.11,20.22 9.01,20.26Q8.9,20.31 8.83,20.39Q8.75,20.47 8.7,20.57Q8.66,20.67 8.66,20.79Q8.66,20.91 8.7,21.01Q8.75,21.12 8.83,21.19Q8.9,21.27 9.01,21.32Q9.11,21.36 9.23,21.36Q9.35,21.36 9.45,21.32Q9.56,21.27 9.63,21.19Q9.71,21.12 9.76,21.01Q9.8,20.91 9.8,20.79ZM13.8,22.38Q13.8,21.85 13.27,21.85Q12.74,21.85 12.74,22.38Q12.74,22.88 13.27,22.88Q13.8,22.88 13.8,22.38ZM17.19,23.19Q17.2,22.98 17.04,22.83Q16.88,22.68 16.68,22.67Q16.45,22.69 16.3,22.83Q16.15,22.98 16.13,23.18Q16.15,23.38 16.29,23.53Q16.44,23.69 16.66,23.67Q16.89,23.67 17.05,23.53Q17.2,23.38 17.19,23.19ZM20.24,24.14Q20.25,23.94 20.09,23.78Q19.93,23.63 19.73,23.62Q19.51,23.64 19.35,23.79Q19.2,23.93 19.19,24.13Q19.2,24.33 19.35,24.48Q19.49,24.64 19.72,24.62Q19.95,24.63 20.1,24.48Q20.25,24.33 20.24,24.14Z')}
.c b::after{background:#2e2e27;clip-path:path('M20.7,21.02Q21,21.16 21.05,21.5Q21.11,21.84 21.02,22.31Q20.94,22.62 20.79,22.95Q20.64,23.27 20.43,23.46Q20.21,23.66 19.94,23.56Q19.59,23.46 19.64,23.11Q19.69,22.76 19.82,22.21Q19.96,21.69 20.19,21.29Q20.41,20.89 20.7,21.02ZM17.75,19.71Q18.07,19.79 18.15,20.07Q18.24,20.34 18.21,20.69Q18.18,21.04 18.11,21.34Q18.05,21.63 17.89,21.97Q17.73,22.31 17.49,22.53Q17.25,22.74 16.88,22.62Q16.6,22.55 16.58,22.31Q16.56,22.08 16.68,21.77Q16.8,21.45 16.88,21.08Q16.95,20.75 17.03,20.4Q17.11,20.05 17.28,19.83Q17.44,19.62 17.75,19.71ZM14.43,18.89Q14.79,18.97 14.86,19.27Q14.94,19.56 14.86,19.94Q14.79,20.32 14.67,20.69Q14.49,21.26 14.21,21.6Q13.93,21.94 13.55,21.8Q13.26,21.71 13.28,21.28Q13.3,20.85 13.46,20.3Q13.55,19.93 13.65,19.57Q13.75,19.21 13.93,19Q14.1,18.8 14.43,18.89ZM9.86,20.42Q9.65,20.18 9.73,19.9Q9.8,19.62 10.02,19.34Q10.23,19.07 10.39,18.86Q10.57,18.62 10.82,18.34Q11.07,18.05 11.35,17.93Q11.62,17.8 11.86,17.98Q12.15,18.19 12.09,18.51Q12.03,18.84 11.82,19.18Q11.6,19.52 11.43,19.75Q11.23,20.03 10.96,20.27Q10.68,20.52 10.39,20.59Q10.1,20.67 9.86,20.42ZM7.36,16.94Q7.29,16.55 7.5,16.34Q7.71,16.12 8.07,15.99Q8.42,15.87 8.71,15.75Q8.98,15.63 9.37,15.47Q9.75,15.3 10.05,15.28Q10.35,15.26 10.43,15.57Q10.55,16.02 10.16,16.4Q9.77,16.79 9.34,17.02Q8.93,17.27 8.5,17.31Q8.07,17.35 7.74,17.25Q7.42,17.16 7.36,16.94ZM10.41,12.25Q10.55,12.72 10.15,13.06Q9.75,13.41 9.26,13.58Q8.98,13.7 8.52,13.78Q8.05,13.86 7.66,13.8Q7.27,13.74 7.25,13.43Q7.21,13.07 7.46,12.93Q7.71,12.78 8.1,12.71Q8.48,12.64 8.81,12.53Q9.2,12.41 9.54,12.26Q9.88,12.12 10.11,12.08Q10.33,12.04 10.41,12.25ZM6.74,7.84Q6.52,7.72 6.29,7.79Q6.05,7.86 5.92,8.09Q5.78,8.31 5.84,8.55Q5.9,8.8 6.11,8.91Q6.31,9.05 6.55,8.97Q6.8,8.89 6.93,8.68Q7.05,8.45 7,8.2Q6.95,7.96 6.74,7.84Z')}
.p i::before{background:#878787;clip-path:path('M13.34,21.73L22.3,19.5Q22.3,19.5 22.23,19.81Q22.15,20.12 22.01,20.61Q21.88,21.1 21.73,21.6Q21.58,22.1 21.45,22.48Q21.31,22.86 21.23,22.98Q21.07,23.19 20.59,23.46Q20.1,23.74 19.52,23.99Q18.95,24.25 18.54,24.4Q18.34,24.48 17.67,24.55Q16.99,24.62 15.98,24.67Q14.96,24.71 13.79,24.75Q12.62,24.79 11.42,24.8Q10.21,24.81 9.17,24.79Q8.12,24.77 7.37,24.72Q6.62,24.68 6.33,24.56Q5.68,24.32 5.06,23.96Q4.43,23.6 3.98,23.26Q3.54,22.92 3.44,22.74Q3.34,22.61 3.2,22.12Q3.07,21.63 2.91,21.06Q2.75,20.5 2.66,20.09Q2.56,19.68 2.56,19.68Z')}
.p b::before{background:linear-gradient(90deg,#e0e0e0 7.81px,#c8c8c8 9.77px,#c8c8c8 17.19px,#ababab 18.75px);clip-path:path('M3.75,21.04Q3.75,21.04 4.02,21.2Q4.3,21.36 4.69,21.55Q5.08,21.75 5.41,21.88Q5.74,22 6.18,22.14Q6.62,22.27 6.94,22.37Q7.27,22.47 7.27,22.47Q7.27,22.47 7.49,22.53Q7.71,22.59 8.01,22.67Q8.3,22.76 8.53,22.85Q8.75,22.94 8.77,23Q8.77,23.04 8.59,23.35Q8.42,23.66 8.19,24.04Q7.97,24.42 7.79,24.71Q7.62,24.99 7.62,24.99Q7.62,24.99 7.32,24.91Q7.03,24.83 6.61,24.69Q6.19,24.54 5.8,24.36Q5.21,24.11 4.85,23.88Q4.49,23.64 4.49,23.64ZM18.4,22.31L17.54,23.56L17.99,24.62Q17.99,24.62 18.36,24.5Q18.73,24.38 19.2,24.17Q19.55,24.01 19.86,23.85Q20.18,23.68 20.18,23.68L20.8,21.38Q20.8,21.38 20.43,21.56Q20.06,21.75 19.69,21.88Q19.45,21.96 19.15,22.07Q18.85,22.18 18.62,22.24Q18.4,22.31 18.4,22.31ZM7.6,24.99L7.27,22.47Q7.27,22.47 7.94,22.62Q8.61,22.78 9.75,22.93Q10.88,23.07 12.25,23.04Q14.51,23 15.86,22.81Q17.21,22.62 17.8,22.47Q18.4,22.31 18.4,22.31L17.99,24.62Q17.99,24.62 17.57,24.73Q17.15,24.85 16.42,25.01Q15.68,25.16 14.77,25.3Q13.85,25.44 12.87,25.46Q11.43,25.5 10.23,25.38Q9.04,25.26 8.32,25.12Q7.6,24.99 7.6,24.99Z')}
.p u::before{background:radial-gradient(ellipse 17px 8px at 12.77px 12.95px,#fac470 38%,#ed9c2c 77%);clip-path:path('M2.32,16.73L3.18,15.91Q3.18,15.91 3.4,15.57Q3.61,15.24 4.12,14.7Q4.63,14.15 5.74,13.71Q6.86,13.27 8.48,12.86Q9.3,12.66 10.37,12.59Q11.45,12.51 12.54,12.53Q13.63,12.55 14.54,12.63Q15.45,12.72 15.94,12.84Q16.58,13 17.43,13.31Q18.28,13.62 19.04,13.95Q19.8,14.29 20.21,14.52Q20.8,14.87 21.12,15.19Q21.45,15.52 21.45,15.52Q21.45,15.52 21.67,15.62Q21.89,15.73 22.14,15.87Q22.38,16 22.46,16.08Q22.52,16.12 22.59,16.35Q22.66,16.57 22.72,16.86Q22.79,17.16 22.84,17.39Q22.89,17.62 22.89,17.66Q22.89,17.7 22.86,18.03Q22.83,18.35 22.8,18.65Q22.77,18.95 22.77,18.95L19.98,20.3Q19.98,20.3 19.48,20.42Q18.98,20.54 18.23,20.71Q17.48,20.89 16.71,21.06Q15.94,21.24 15.35,21.35Q14.77,21.45 14.65,21.45Q14.53,21.45 14,21.44Q13.48,21.43 12.72,21.4Q11.97,21.38 11.15,21.35Q10.33,21.32 9.6,21.28Q8.87,21.24 8.4,21.22Q7.93,21.2 7.89,21.18Q7.83,21.18 7.38,21.03Q6.93,20.89 6.3,20.67Q5.66,20.46 5.02,20.24Q4.38,20.03 3.92,19.86Q3.46,19.7 3.38,19.64Q3.22,19.58 3.04,19.35Q2.85,19.13 2.71,18.93Q2.56,18.74 2.56,18.74Q2.56,18.74 2.52,18.46Q2.48,18.19 2.44,17.82Q2.4,17.45 2.36,17.14Q2.32,16.82 2.32,16.73Z')}
.p u::after{background:#ce701d;clip-path:path('M10.61,13.19Q10.59,13.09 10.16,13.1Q9.73,13.11 9.18,13.25Q8.46,13.41 8,13.73Q7.54,14.05 7.71,14.42Q7.81,14.66 8.08,14.53Q8.34,14.4 8.68,14.16Q9.02,13.91 9.36,13.76Q10.02,13.45 10.32,13.39Q10.62,13.33 10.61,13.19ZM11.5,13.97Q11.6,14.01 11.46,14.38Q11.31,14.75 11.13,15.28Q11.07,15.46 11,15.76Q10.92,16.06 10.75,16.27Q10.59,16.47 10.31,16.38Q10.06,16.3 10.09,16.05Q10.12,15.81 10.29,15.5Q10.47,15.18 10.64,14.89Q10.9,14.48 11.14,14.2Q11.39,13.91 11.5,13.97ZM13.38,13.88Q13.48,13.82 13.74,14.13Q14,14.44 14.18,14.66Q14.24,14.73 14.38,14.95Q14.51,15.16 14.64,15.42Q14.77,15.67 14.78,15.88Q14.79,16.08 14.57,16.16Q14.28,16.26 14.1,16.05Q13.93,15.85 13.82,15.51Q13.71,15.16 13.63,14.89Q13.48,14.5 13.39,14.21Q13.3,13.91 13.38,13.88ZM14.34,13.31Q14.34,13.17 14.91,13.25Q15.49,13.33 16.21,13.58Q16.91,13.84 17.2,14.02Q17.48,14.21 17.38,14.5Q17.3,14.7 17.07,14.65Q16.84,14.6 16.51,14.43Q16.19,14.27 15.9,14.09Q15.31,13.8 14.81,13.63Q14.32,13.46 14.34,13.31Z')}
.p b::after{background:#eaeaea;clip-path:path('M13.73,4.87Q13.85,4.81 14.27,5.08Q14.69,5.34 15.21,5.85Q15.72,6.36 16.15,7.06Q16.56,7.74 16.53,8.39Q16.5,9.03 16.21,9.54Q15.92,10.05 15.59,10.32Q15.08,10.73 14.45,11.23Q13.83,11.73 13.42,12.33Q13.14,12.74 13.1,13.19Q13.05,13.64 13.05,13.96Q13.05,14.29 12.89,14.3Q12.66,14.32 12.21,14.02Q11.76,13.72 11.39,13.33Q10.96,12.92 10.57,12.29Q10.18,11.67 10.08,10.57Q10.02,9.95 10.24,9.45Q10.47,8.95 10.81,8.58Q11.15,8.21 11.5,7.97Q11.86,7.72 12.05,7.59Q12.44,7.31 12.86,6.96Q13.28,6.61 13.48,6.2Q13.61,5.93 13.61,5.64Q13.61,5.36 13.61,5.15Q13.61,4.95 13.73,4.87Z')}
.p i::after{background:#e08013;clip-path:path('M15.21,20.73Q15.21,20.73 14.72,20.48Q14.22,20.22 13.2,20.2Q12.46,20.18 11.9,20.43Q11.35,20.67 11.04,20.93Q10.74,21.18 10.74,21.18Q10.74,21.18 10.48,20.99Q10.21,20.81 9.79,20.57Q9.36,20.34 8.87,20.14Q8.38,19.95 7.93,19.91Q7.34,19.85 7.01,19.99Q6.68,20.12 6.55,20.28Q6.43,20.44 6.43,20.44Q6.43,20.44 6.25,20.22Q6.07,20.01 5.78,19.71Q5.49,19.4 5.13,19.12Q4.77,18.84 4.41,18.68Q4.06,18.54 3.81,18.6Q3.55,18.66 3.41,18.76Q3.26,18.86 3.26,18.86Q3.26,18.86 3.26,18.67Q3.26,18.48 3.23,18.24Q3.2,18 3.16,17.86Q3.11,17.62 2.9,17.36Q2.7,17.1 2.7,17.1Q2.7,17.1 2.73,16.93Q2.77,16.77 2.85,16.53Q2.93,16.3 3.06,16.1Q3.18,15.91 3.18,15.91Q3.18,15.91 2.91,15.93Q2.64,15.95 2.42,16.08Q2.27,16.16 1.99,16.4Q1.72,16.65 1.52,17.08Q1.33,17.51 1.46,18.13Q1.58,18.76 2.19,19.38Q2.79,20.01 3.74,20.55Q4.69,21.1 5.82,21.53Q7.4,22.12 9,22.32Q10.61,22.53 12.16,22.52Q13.71,22.51 15.14,22.41Q16.15,22.35 17.15,22.14Q18.14,21.92 18.99,21.65Q19.84,21.38 20.45,21.11Q21.05,20.85 21.33,20.69Q22.09,20.2 22.59,19.71Q23.09,19.23 23.32,18.6Q23.5,18.19 23.43,17.93Q23.36,17.66 23.23,17.54Q23.11,17.41 23.11,17.41Q23.11,17.41 23.12,17.18Q23.12,16.94 23.06,16.62Q22.99,16.3 22.79,16.06Q22.5,15.73 22.19,15.62Q21.88,15.52 21.66,15.52Q21.45,15.52 21.45,15.52Q21.45,15.52 21.66,15.75Q21.88,15.98 22.09,16.3Q22.34,16.69 22.43,17.03Q22.52,17.37 22.52,17.37Q22.52,17.37 22.31,17.43Q22.11,17.49 21.84,17.88Q21.68,18.11 21.56,18.46Q21.45,18.8 21.38,19.08Q21.31,19.36 21.29,19.4Q21.27,19.44 21.07,19.36Q20.88,19.29 20.54,19.23Q20.2,19.17 19.73,19.29Q19.34,19.4 19.05,19.65Q18.77,19.89 18.62,20.1Q18.48,20.3 18.48,20.3Q18.48,20.3 18.12,20.14Q17.77,19.99 16.97,20.01Q16.43,20.01 16.04,20.19Q15.64,20.38 15.43,20.55Q15.21,20.73 15.21,20.73Z')}
</style>
</head>
<body>
<header>
<div class="brand"><span style="letter-spacing:-0.14px">RDU2 Scale Lab</span> <small style="letter-spacing:0.122px">Dynamic Inventory</small></div>
<nav>
<a style="letter-spacing:0.221px">Inventory</a>
<a style="letter-spacing:0.19px">Assignments</a>
<a style="letter-spacing:0.13px">Vlans</a>
<a style="letter-spacing:0.169px">Available</a>
<a class="dd" style="letter-spacing:0.139px">Visuals</a>
<a class="dd" style="letter-spacing:0.191px">Docs</a>
<a class="dd" style="letter-spacing:0.022px">Jira</a>
<a style="letter-spacing:0.222px">Chat</a>
<a style="letter-spacing:0.27px">Contact</a>
<a style="letter-spacing:0.149px">FAQ</a>
<a style="letter-spacing:0.252px">Request</a>
<a style="letter-spacing:0.196px">Usage</a>
</nav>
</header>
<main>
<h1 style="letter-spacing:0.263px">Monthly Usage</h1>
<div class="info"><b><span style="letter-spacing:-0.066px">Allocation Map for 2024-12</span><br><span style="letter-spacing:-0.063px">(Hover cursor over squares for details on allocation)</span><br><br><span style="letter-spacing:-0.083px">Percentage Utilized (Monthly): 79%</span><br><span style="letter-spacing:-0.051px">Percentage Utilized (Today): 78%</span><br><span style="letter-spacing:-0.057px">Total Systems in Use: 974</span><br><span style="letter-spacing:-0.029px">Total Usable Systems: 1234</span><br><br></b></div>
<table>
<tr><th class="n">Name</th><th>01</th><th>02</th><th>03</th><th>04</th><th>05</th><th>06</th><th>07</th><th>08</th><th>09</th><th>10</th><th>11</th><th>12</th><th>13</th><th>14</th><th>15</th><th>16</th><th>17</th><th>18</th><th>19</th><th>20</th><th>21</th><th>22</th><th>23</th><th>24</th><th>25</th><th>26</th><th>27</th><th>28</th><th>29</th><th>30</th><th>31</th></tr>
<tr><td class="n">d16-h01-000-r650.rdu2.scalelab</td><td class="e s"><i><b><u></u></b></i></td><td class="e s"><i><b><u></u></b></i></td><td class="e s"><i><b><u></u></b></i></td><td class="e s"><i><b><u></u></b></i></td><td class="e s"><i><b><u></u></b></i></td><td class="e s"><i><b><u></u></b></i></td><td class="e s"><i><b><u></u></b></i></td><td class="e s"><i><b><u></u></b></i></td><td class="e b"><i><b><u></u></b></i></td><td class="e b"><i><b><u></u></b></i></td><td class="e b"><i><b><u></u></b></i></td><td class="e b"><i><b><u></u></b></i></td><td class="e b"><i><b><u></u></b></i></td><td class="e b"><i><b><u></u></b></i></td><td class="e b"><i><b><u></u></b></i></td><td class="e b"><i><b><u></u></b></i></td><td class="e b"><i><b><u></u></b></i></td><td class="e b"><i><b><u></u></b></i></td><td class="e b"><i><b><u></u></b></i></td><td class="e b"><i><b><u></u></b></i></td><td class="e b"><i><b><u></u></b></i></td><td class="e b"><i><b><u></u></b></i></td><td class="e b"><i><b><u></u></b></i></td><td class="e b"><i><b><u></u></b></i></td><td class="e b"><i><b><u></u></b></i></td><td class="e b"><i><b><u></u></b></i></td><td class="e b"><i><b><u></u></b></i></td><td class="e b"><i><b><u></u></b></i></td><td class="e b"><i><b><u></u></b></i></td><td class="e b"><i><b><u></u></b></i></td><td class="e b"><i><b><u></u></b></i></td></tr>
<tr><td class="n">d16-h02-000-r650.rdu2.scalelab</td><td class="g"></td><td class="g"></td><td class="g"></td><td class="g"></td><td class="g"></td><td class="g"></td><td class="g"></td><td class="g"></td><td class="g"></td><td class="g"></td><td class="g"></td><td class="g"></td><td class="g"></td><td class="g"></td><td class="g"></td><td class="g"></td><td class="g"></td><td class="g"></td><td class="g"></td><td class="g"></td><td class="g"></td><td class="g"></td><td class="g"></td><td class="g"></td><td class="g"></td><td class="g"></td><td class="g"></td><td class="g"></td><td class="g"></td><td class="g"></td><td class="g"></td></tr>
<tr><td class="n">d16-h03-000-r650.rdu2.scalelab</td><td class="g"></td><td class="g"></td><td class="g"></td><td class="g"></td><td class="g"></td><td class="g"></td><td class="g"></td><td class="g"></td><td class="g"></td><td class="g"></td><td class="g"></td><td class="g"></td><td class="g"></td><td class="g"></td><td class="g"></td><td class="g"></td><td class="g"></td><td class="g"></td><td class="g"></td><td class="g"></td><td class="g"></td><td class="g"></td><td class="g"></td><td class="g"></td><td class="g"></td><td class="g"></td><td class="g"></td><td class="g"></td><td class="g"></td><td class="g"></td><td class="g"></td></tr>
<tr><td class="n">d16-h05-000-r650.rdu2.scalelab</td><td class="g"></td><td class="g"></td><td class="g"></td><td class="g"></td><td class="g"></td><td class="g"></td><td class="g"></td><td class="g"></td><td class="g"></td><td class="g"></td><td class="g"></td><td class="g"></td><td class="g"></td><td class="g"></td><td class="g"></td><td class="g"></td><td class="g"></td><td class="g"></td><td class="g"></td><td class="g"></td><td class="g"></td><td class="g"></td><td class="g"></td><td class="g"></td><td class="g"></td><td class="g"></td><td class="g"></td><td class="g"></td><td class="g"></td><td class="g"></td><td class="g"></td></tr>
<tr><td class="n">d16-h06-000-r650.rdu2.scalelab</td><td class="e h"><i><b><u></u></b></i></td><td class="e h"><i><b><u></u></b></i></td><td class="e h"><i><b><u></u></b></i></td><td class="e h"><i><b><u></u></b></i></td><td class="e h"><i><b><u></u></b></i></td><td class="e h"><i><b><u></u></b></i></td><td class="e h"><i><b><u></u></b></i></td><td class="e h"><i><b><u></u></b></i></td><td class="e h"><i><b><u></u></b></i></td><td class="e h"><i><b><u></u></b></i></td><td class="e h"><i><b><u></u></b></i></td><td class="e h"><i><b><u></u></b></i></td><td class="e h"><i><b><u></u></b></i></td><td class="e h"><i><b><u></u></b></i></td><td class="e h"><i><b><u></u></b></i></td><td class="e h"><i><b><u></u></b></i></td><td class="e h"><i><b><u></u></b></i></td><td class="e h"><i><b><u></u></b></i></td><td class="e h"><i><b><u></u></b></i></td><td class="e h"><i><b><u></u></b></i></td><td class="e h"><i><b><u></u></b></i></td><td class="e h"><i><b><u></u></b></i></td><td class="e h"><i><b><u></u></b></i></td><td class="e h"><i><b><u></u></b></i></td><td class="e h"><i><b><u></u></b></i></td><td class="e h"><i><b><u></u></b></i></td><td class="e h"><i><b><u></u></b></i></td><td class="e h"><i><b><u></u></b></i></td><td class="e h"><i><b><u></u></b></i></td><td class="e h"><i><b><u></u></b></i></td><td class="e h"><i><b><u></u></b></i></td></tr>
<tr><td class="n">d16-h07-000-r650.rdu2.scalelab</td><td class="e h"><i><b><u></u></b></i></td><td class="e h"><i><b><u></u></b></i></td><td class="e h"><i><b><u></u></b></i></td><td class="e h"><i><b><u></u></b></i></td><td class="e h"><i><b><u></u></b></i></td><td class="e h"><i><b><u></u></b></i></td><td class="e h"><i><b><u></u></b></i></td><td class="e h"><i><b><u></u></b></i></td><td class="e h"><i><b><u></u></b></i></td><td class="e h"><i><b><u></u></b></i></td><td class="e h"><i><b><u></u></b></i></td><td class="e h"><i><b><u></u></b></i></td><td class="e h"><i><b><u></u></b></i></td><td class="e h"><i><b><u></u></b></i></td><td class="e h"><i><b><u></u></b></i></td><td class="e h"><i><b><u></u></b></i></td><td class="e h"><i><b><u></u></b></i></td><td class="e h"><i><b><u></u></b></i></td><td class="e h"><i><b><u></u></b></i></td><td class="e h"><i><b><u></u></b></i></td><td class="e h"><i><b><u></u></b></i></td><td class="e h"><i><b><u></u></b></i></td><td class="e h"><i><b><u></u></b></i></td><td class="e h"><i><b><u></u></b></i></td><td class="e h"><i><b><u></u></b></i></td><td class="e h"><i><b><u></u></b></i></td><td class="e h"><i><b><u></u></b></i></td><td class="e h"><i><b><u></u></b></i></td><td class="e h"><i><b><u></u></b></i></td><td class="e h"><i><b><u></u></b></i></td><td class="e h"><i><b><u></u></b></i></td></tr>
<tr><td class="n">d16-h09-000-r650.rdu2.scalelab</td><td class="e h"><i><b><u></u></b></i></td><td class="e h"><i><b><u></u></b></i></td><td class="e h"><i><b><u></u></b></i></td><td class="e h"><i><b><u></u></b></i></td><td class="e h"><i><b><u></u></b></i></td><td class="e h"><i><b><u></u></b></i></td><td class="e h"><i><b><u></u></b></i></td><td class="e h"><i><b><u></u></b></i></td><td class="e h"><i><b><u></u></b></i></td><td class="e h"><i><b><u></u></b></i></td><td class="e h"><i><b><u></u></b></i></td><td class="e h"><i><b><u></u></b></i></td><td class="e h"><i><b><u></u></b></i></td><td class="e h"><i><b><u></u></b></i></td><td class="e h"><i><b><u></u></b></i></td><td class="e h"><i><b><u></u></b></i></td><td class="e h"><i><b><u></u></b></i></td><td class="e h"><i><b><u></u></b></i></td><td class="e h"><i><b><u></u></b></i></td><td class="e h"><i><b><u></u></b></i></td><td class="e h"><i><b><u></u></b></i></td><td class="e h"><i><b><u></u></b></i></td><td class="e h"><i><b><u></u></b></i></td><td class="e h"><i><b><u></u></b></i></td><td class="e h"><i><b><u></u></b></i></td><td class="e h"><i><b><u></u></b></i></td><td class="e h"><i><b><u></u></b></i></td><td class="e h"><i><b><u></u></b></i></td><td class="e h"><i><b><u></u></b></i></td><td class="e h"><i><b><u></u></b></i></td><td class="e h"><i><b><u></u></b></i></td></tr>
<tr><td class="n">d16-h10-000-r650.rdu2.scalelab</td><td class="e s"><i><b><u></u></b></i></td><td class="e s"><i><b><u></u></b></i></td><td class="e s"><i><b><u></u></b></i></td><td class="e s"><i><b><u></u></b></i></td><td class="e s"><i><b><u></u></b></i></td><td class="e s"><i><b><u></u></b></i></td><td class="e s"><i><b><u></u></b></i></td><td class="e s"><i><b><u></u></b></i></td><td class="e b"><i><b><u></u></b></i></td><td class="e b"><i><b><u></u></b></i></td><td class="e b"><i><b><u></u></b></i></td><td class="e b"><i><b><u></u></b></i></td><td class="e b"><i><b><u></u></b></i></td><td class="e b"><i><b><u></u></b></i></td><td class="e b"><i><b><u></u></b></i></td><td class="e b"><i><b><u></u></b></i></td><td class="e b"><i><b><u></u></b></i></td><td class="e b"><i><b><u></u></b></i></td><td class="e b"><i><b><u></u></b></i></td><td class="e b"><i><b><u></u></b></i></td><td class="e b"><i><b><u></u></b></i></td><td class="e b"><i><b><u></u></b></i></td><td class="e b"><i><b><u></u></b></i></td><td class="e b"><i><b><u></u></b></i></td><td class="e b"><i><b><u></u></b></i></td><td class="e b"><i><b><u></u></b></i></td><td class="e b"><i><b><u></u></b></i></td><td class="e b"><i><b><u></u></b></i></td><td class="e b"><i><b><u></u></b></i></td><td class="e b"><i><b><u></u></b></i></td><td class="e b"><i><b><u></u></b></i></td></tr>
<tr><td class="n">d16-h11-000-r650.rdu2.scalelab</td><td class="e s"><i><b><u></u></b></i></td><td class="e s"><i><b><u></u></b></i></td><td class="e s"><i><b><u></u></b></i></td><td class="e s"><i><b><u></u></b></i></td><td class="e s"><i><b><u></u></b></i></td><td class="e s"><i><b><u></u></b></i></td><td class="e s"><i><b><u></u></b></i></td><td class="e s"><i><b><u></u></b></i></td><td class="e b"><i><b><u></u></b></i></td><td class="e b"><i><b><u></u></b></i></td><td class="e b"><i><b><u></u></b></i></td><td class="e b"><i><b><u></u></b></i></td><td class="e b"><i><b><u></u></b></i></td><td class="e b"><i><b><u></u></b></i></td><td class="e b"><i><b><u></u></b></i></td><td class="e b"><i><b><u></u></b></i></td><td class="e b"><i><b><u></u></b></i></td><td class="e b"><i><b><u></u></b></i></td><td class="e b"><i><b><u></u></b></i></td><td class="e b"><i><b><u></u></b></i></td><td class="e b"><i><b><u></u></b></i></td><td class="e b"><i><b><u></u></b></i></td><td class="e b"><i><b><u></u></b></i></td><td class="e b"><i><b><u></u></b></i></td><td class="e b"><i><b><u></u></b></i></td><td class="e b"><i><b><u></u></b></i></td><td class="e b"><i><b><u></u></b></i></td><td class="e b"><i><b><u></u></b></i></td><td class="e b"><i><b><u></u></b></i></td><td class="e b"><i><b><u></u></b></i></td><td class="e b"><i><b><u></u></b></i></td></tr>
<tr><td class="n">d16-h13-000-r650.rdu2.scalelab</td><td class="g"></td><td class="g"></td><td class="g"></td><td class="g"></td><td class="g"></td><td class="g"></td><td class="g"></td><td class="g"></td><td class="g"></td><td class="g"></td><td class="g"></td><td class="g"></td><td class="g"></td><td class="g"></td><td class="g"></td><td class="g"></td><td class="g"></td><td class="g"></td><td class="g"></td><td class="g"></td><td class="g"></td><td class="g"></td><td class="g"></td><td class="g"></td><td class="g"></td><td class="g"></td><td class="g"></td><td class="g"></td><td class="g"></td><td class="g"></td><td class="g"></td></tr>
<tr><td class="n">d16-h14-000-r650.rdu2.scalelab</td><td class="e s"><i><b><u></u></b></i></td><td class="e s"><i><b><u></u></b></i></td><td class="e s"><i><b><u></u></b></i></td><td class="e s"><i><b><u></u></b></i></td><td class="e s"><i><b><u></u></b></i></td><td class="e s"><i><b><u></u></b></i></td><td class="e s"><i><b><u></u></b></i></td><td class="e s"><i><b><u></u></b></i></td><td class="e b"><i><b><u></u></b></i></td><td class="e b"><i><b><u></u></b></i></td><td class="e b"><i><b><u></u></b></i></td><td class="e b"><i><b><u></u></b></i></td><td class="e b"><i><b><u></u></b></i></td><td class="e b"><i><b><u></u></b></i></td><td class="e b"><i><b><u></u></b></i></td><td class="e b"><i><b><u></u></b></i></td><td class="e b"><i><b><u></u></b></i></td><td class="e b"><i><b><u></u></b></i></td><td class="e b"><i><b><u></u></b></i></td><td class="e b"><i><b><u></u></b></i></td><td class="e b"><i><b><u></u></b></i></td><td class="e b"><i><b><u></u></b></i></td><td class="e b"><i><b><u></u></b></i></td><td class="e b"><i><b><u></u></b></i></td><td class="e b"><i><b><u></u></b></i></td><td class="e b"><i><b><u></u></b></i></td><td class="e b"><i><b><u></u></b></i></td><td class="e b"><i><b><u></u></b></i></td><td class="e b"><i><b><u></u></b></i></td><td class="e b"><i><b><u></u></b></i></td><td class="e b"><i><b><u></u></b></i></td></tr>
<tr><td class="n">d16-h15-000-r650.rdu2.scalelab</td><td class="e s"><i><b><u></u></b></i></td><td class="e s"><i><b><u></u></b></i></td><td class="e s"><i><b><u></u></b></i></td><td class="e s"><i><b><u></u></b></i></td><td class="e s"><i><b><u></u></b></i></td><td class="e s"><i><b><u></u></b></i></td><td class="e s"><i><b><u></u></b></i></td><td class="e s"><i><b><u></u></b></i></td><td class="e b"><i><b><u></u></b></i></td><td class="e b"><i><b><u></u></b></i></td><td class="e b"><i><b><u></u></b></i></td><td class="e b"><i><b><u></u></b></i></td><td class="e b"><i><b><u></u></b></i></td><td class="e b"><i><b><u></u></b></i></td><td class="e b"><i><b><u></u></b></i></td><td class="e b"><i><b><u></u></b></i></td><td class="e b"><i><b><u></u></b></i></td><td class="e b"><i><b><u></u></b></i></td><td class="e b"><i><b><u></u></b></i></td><td class="e b"><i><b><u></u></b></i></td><td class="e b"><i><b><u></u></b></i></td><td class="e b"><i><b><u></u></b></i></td><td class="e b"><i><b><u></u></b></i></td><td class="e b"><i><b><u></u></b></i></td><td class="e b"><i><b><u></u></b></i></td><td class="e b"><i><b><u></u></b></i></td><td class="e b"><i><b><u></u></b></i></td><td class="e b"><i><b><u></u></b></i></td><td class="e b"><i><b><u></u></b></i></td><td class="e b"><i><b><u></u></b></i></td><td class="e b"><i><b><u></u></b></i></td></tr>
<tr><td class="n">d17-h23-000-r650.rdu2.scalelab</td><td class="e c"><i><b><u></u></b></i></td><td class="e c"><i><b><u></u></b></i></td><td class="e c"><i><b><u></u></b></i></td><td class="e c"><i><b><u></u></b></i></td><td class="e c"><i><b><u></u></b></i></td><td class="e c"><i><b><u></u></b></i></td><td class="e c"><i><b><u></u></b></i></td><td class="e c"><i><b><u></u></b></i></td><td class="e c"><i><b><u></u></b></i></td><td class="e c"><i><b><u></u></b></i></td><td class="e c"><i><b><u></u></b></i></td><td class="e c"><i><b><u></u></b></i></td><td class="e c"><i><b><u></u></b></i></td><td class="e c"><i><b><u></u></b></i></td><td class="e c"><i><b><u></u></b></i></td><td class="e c"><i><b><u></u></b></i></td><td class="e c"><i><b><u></u></b></i></td><td class="e c"><i><b><u></u></b></i></td><td class="e c"><i><b><u></u></b></i></td><td class="e c"><i><b><u></u></b></i></td><td class="e c"><i><b><u></u></b></i></td><td class="e c"><i><b><u></u></b></i></td><td class="e c"><i><b><u></u></b></i></td><td class="e c"><i><b><u></u></b></i></td><td class="e c"><i><b><u></u></b></i></td><td class="e c"><i><b><u></u></b></i></td><td class="e c"><i><b><u></u></b></i></td><td class="e c"><i><b><u></u></b></i></td><td class="e c"><i><b><u></u></b></i></td><td class="e c"><i><b><u></u></b></i></td><td class="e c"><i><b><u></u></b></i></td></tr>
<tr><td class="n">d17-h24-000-r650.rdu2.scalelab</td><td class="e c"><i><b><u></u></b></i></td><td class="e c"><i><b><u></u></b></i></td><td class="e c"><i><b><u></u></b></i></td><td class="e c"><i><b><u></u></b></i></td><td class="e c"><i><b><u></u></b></i></td><td class="e c"><i><b><u></u></b></i></td><td class="e c"><i><b><u></u></b></i></td><td class="e c"><i><b><u></u></b></i></td><td class="e c"><i><b><u></u></b></i></td><td class="e c"><i><b><u></u></b></i></td><td class="e c"><i><b><u></u></b></i></td><td class="e c"><i><b><u></u></b></i></td><td class="e c"><i><b><u></u></b></i></td><td class="e c"><i><b><u></u></b></i></td><td class="e c"><i><b><u></u></b></i></td><td class="e c"><i><b><u></u></b></i></td><td class="e c"><i><b><u></u></b></i></td><td class="e c"><i><b><u></u></b></i></td><td class="e c"><i><b><u></u></b></i></td><td class="e c"><i><b><u></u></b></i></td><td class="e c"><i><b><u></u></b></i></td><td class="e c"><i><b><u></u></b></i></td><td class="e c"><i><b><u></u></b></i></td><td class="e c"><i><b><u></u></b></i></td><td class="e c"><i><b><u></u></b></i></td><td class="e c"><i><b><u></u></b></i></td><td class="e c"><i><b><u></u></b></i></td><td class="e c"><i><b><u></u></b></i></td><td class="e c"><i><b><u></u></b></i></td><td class="e c"><i><b><u></u></b></i></td><td class="e c"><i><b><u></u></b></i></td></tr>
<tr><td class="n">d17-h25-000-r650.rdu2.scalelab</td><td class="e c"><i><b><u></u></b></i></td><td class="e c"><i><b><u></u></b></i></td><td class="e c"><i><b><u></u></b></i></td><td class="e c"><i><b><u></u></b></i></td><td class="e c"><i><b><u></u></b></i></td><td class="e c"><i><b><u></u></b></i></td><td class="e c"><i><b><u></u></b></i></td><td class="e c"><i><b><u></u></b></i></td><td class="e c"><i><b><u></u></b></i></td><td class="e c"><i><b><u></u></b></i></td><td class="e c"><i><b><u></u></b></i></td><td class="e c"><i><b><u></u></b></i></td><td class="e c"><i><b><u></u></b></i></td><td class="e c"><i><b><u></u></b></i></td><td class="e c"><i><b><u></u></b></i></td><td class="e c"><i><b><u></u></b></i></td><td class="e c"><i><b><u></u></b></i></td><td class="e c"><i><b><u></u></b></i></td><td class="e c"><i><b><u></u></b></i></td><td class="e c"><i><b><u></u></b></i></td><td class="e c"><i><b><u></u></b></i></td><td class="e c"><i><b><u></u></b></i></td><td class="e c"><i><b><u></u></b></i></td><td class="e c"><i><b><u></u></b></i></td><td class="e c"><i><b><u></u></b></i></td><td class="e c"><i><b><u></u></b></i></td><td class="e c"><i><b><u></u></b></i></td><td class="e c"><i><b><u></u></b></i></td><td class="e c"><i><b><u></u></b></i></td><td class="e c"><i><b><u></u></b></i></td><td class="e c"><i><b><u></u></b></i></td></tr>
<tr><td class="n">d17-h27-000-r650.rdu2.scalelab</td><td class="e h"><i><b><u></u></b></i></td><td class="e h"><i><b><u></u></b></i></td><td class="e h"><i><b><u></u></b></i></td><td class="e h"><i><b><u></u></b></i></td><td class="e h"><i><b><u></u></b></i></td><td class="e h"><i><b><u></u></b></i></td><td class="e h"><i><b><u></u></b></i></td><td class="e h"><i><b><u></u></b></i></td><td class="e h"><i><b><u></u></b></i></td><td class="e h"><i><b><u></u></b></i></td><td class="e h"><i><b><u></u></b></i></td><td class="e h"><i><b><u></u></b></i></td><td class="e h"><i><b><u></u></b></i></td><td class="e h"><i><b><u></u></b></i></td><td class="e h"><i><b><u></u></b></i></td><td class="e h"><i><b><u></u></b></i></td><td class="e h"><i><b><u></u></b></i></td><td class="e h"><i><b><u></u></b></i></td><td class="e h"><i><b><u></u></b></i></td><td class="e h"><i><b><u></u></b></i></td><td class="e h"><i><b><u></u></b></i></td><td class="e h"><i><b><u></u></b></i></td><td class="e h"><i><b><u></u></b></i></td><td class="e h"><i><b><u></u></b></i></td><td class="e h"><i><b><u></u></b></i></td><td class="e h"><i><b><u></u></b></i></td><td class="e h"><i><b><u></u></b></i></td><td class="e h"><i><b><u></u></b></i></td><td class="e h"><i><b><u></u></b></i></td><td class="e h"><i><b><u></u></b></i></td><td class="e h"><i><b><u></u></b></i></td></tr>
<tr><td class="n">d17-h28-000-r650.rdu2.scalelab</td><td class="e h"><i><b><u></u></b></i></td><td class="e h"><i><b><u></u></b></i></td><td class="e h"><i><b><u></u></b></i></td><td class="e h"><i><b><u></u></b></i></td><td class="e h"><i><b><u></u></b></i></td><td class="e h"><i><b><u></u></b></i></td><td class="e h"><i><b><u></u></b></i></td><td class="e h"><i><b><u></u></b></i></td><td class="e h"><i><b><u></u></b></i></td><td class="e h"><i><b><u></u></b></i></td><td class="e h"><i><b><u></u></b></i></td><td class="e h"><i><b><u></u></b></i></td><td class="e h"><i><b><u></u></b></i></td><td class="e h"><i><b><u></u></b></i></td><td class="e h"><i><b><u></u></b></i></td><td class="e h"><i><b><u></u></b></i></td><td class="e h"><i><b><u></u></b></i></td><td class="e h"><i><b><u></u></b></i></td><td class="e h"><i><b><u></u></b></i></td><td class="e h"><i><b><u></u></b></i></td><td class="e h"><i><b><u></u></b></i></td><td class="e h"><i><b><u></u></b></i></td><td class="e h"><i><b><u></u></b></i></td><td class="e h"><i><b><u></u></b></i></td><td class="e h"><i><b><u></u></b></i></td><td class="e h"><i><b><u></u></b></i></td><td class="e h"><i><b><u></u></b></i></td><td class="e h"><i><b><u></u></b></i></td><td class="e h"><i><b><u></u></b></i></td><td class="e h"><i><b><u></u></b></i></td><td class="e h"><i><b><u></u></b></i></td></tr>
<tr><td class="n">d17-h29-000-r650.rdu2.scalelab</td><td class="e p"><i><b><u></u></b></i></td><td class="e p"><i><b><u></u></b></i></td><td class="e p"><i><b><u></u></b></i></td><td class="e p"><i><b><u></u></b></i></td><td class="e p"><i><b><u></u></b></i></td><td class="e p"><i><b><u></u></b></i></td><td class="e p"><i><b><u></u></b></i></td><td class="e p"><i><b><u></u></b></i></td><td class="e p"><i><b><u></u></b></i></td><td class="e p"><i><b><u></u></b></i></td><td class="e p"><i><b><u></u></b></i></td><td class="e p"><i><b><u></u></b></i></td><td class="e p"><i><b><u></u></b></i></td><td class="e p"><i><b><u></u></b></i></td><td class="e p"><i><b><u></u></b></i></td><td class="g"></td><td class="g"></td><td class="g"></td><td class="g"></td><td class="g"></td><td class="g"></td><td class="g"></td><td class="g"></td><td class="g"></td><td class="g"></td><td class="g"></td><td class="g"></td><td class="g"></td><td class="g"></td><td class="g"></td><td class="g"></td></tr>
<tr><td class="n"></td><td class="e h"><i><b><u></u></b></i></td><td class="e h"><i><b><u></u></b></i></td><td class="e h"><i><b><u></u></b></i></td><td class="e h"><i><b><u></u></b></i></td><td class="e h"><i><b><u></u></b></i></td><td class="e h"><i><b><u></u></b></i></td><td class="e h"><i><b><u></u></b></i></td><td class="e h"><i><b><u></u></b></i></td><td class="e h"><i><b><u></u></b></i></td><td class="e h"><i><b><u></u></b></i></td><td class="e h"><i><b><u></u></b></i></td><td class="e h"><i><b><u></u></b></i></td><td class="e h"><i><b><u></u></b></i></td><td class="e h"><i><b><u></u></b></i></td><td class="e h"><i><b><u></u></b></i></td><td class="e h"><i><b><u></u></b></i></td><td class="e h"><i><b><u></u></b></i></td><td class="e h"><i><b><u></u></b></i></td><td class="e h"><i><b><u></u></b></i></td><td class="e h"><i><b><u></u></b></i></td><td class="e h"><i><b><u></u></b></i></td><td class="e h"><i><b><u></u></b></i></td><td class="e h"><i><b><u></u></b></i></td><td class="e h"><i><b><u></u></b></i></td><td class="e h"><i><b><u></u></b></i></td><td class="e h"><i><b><u></u></b></i></td><td class="e h"><i><b><u></u></b></i></td><td class="e h"><i><b><u></u></b></i></td><td class="e h"><i><b><u></u></b></i></td><td class="e h"><i><b><u></u></b></i></td><td class="e h"><i><b><u></u></b></i></td></tr>
</table>
<div class="tip"><span class="d" style="letter-spacing:0.003px">Description: ACM 2.12 Large Scale</span><br><span class="d" style="letter-spacing:0.041px">Env: cloud37</span><br><span class="d" style="letter-spacing:-0.114px">Owner: txue</span><br><span class="d" style="letter-spacing:-0.013px">Ticket: 3672</span><br><span style="letter-spacing:-0.04px">Day: 8</span></div>
</main>
</body>
</html>
